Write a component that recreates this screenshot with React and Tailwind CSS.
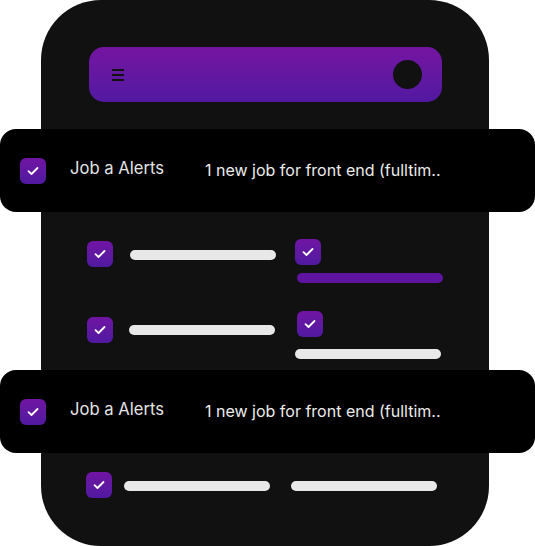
import React from "react";

function Check({ className = "" }) {
  return (
    <div
      className={`w-[26px] h-[26px] shrink-0 rounded-[6px] bg-gradient-to-b from-[#7114a3] to-[#5019a0] flex items-center justify-center ${className}`}
    >
      <svg width="12" height="10" viewBox="0 0 12 10" fill="none">
        <path d="M1.5 5.2l3 2.8L10.5 2" stroke="#fff" strokeWidth="1.8" strokeLinecap="round" strokeLinejoin="round" />
      </svg>
    </div>
  );
}

function Bar({ className = "", purple = false }) {
  return (
    <div
      className={`w-[146px] h-[10px] shrink-0 rounded-full ${purple ? "bg-[#5f14a0]" : "bg-[#e8e8e8]"} ${className}`}
    />
  );
}

function Alert({ className = "" }) {
  return (
    <div className={`-ml-[41px] w-[535px] h-[83px] rounded-[16px] bg-black flex items-center pl-[20px] ${className}`}>
      <Check />
      <span className="ml-[24px] w-[135px] pb-[4px] text-[16.6px] text-[#e4e4e4] whitespace-nowrap">Job a Alerts</span>
      <span className="pb-[1px] text-[16px] text-[#ececec] whitespace-nowrap">1 new job for front end (fulltim..</span>
    </div>
  );
}

export default function App() {
  return (
    <div className="w-[535px] h-[546px] bg-white font-['Inter',sans-serif] overflow-hidden">
      <div className="ml-[41px] w-[448px] h-[546px] rounded-[60px] bg-[#111111] flex flex-col pt-[47px]">
        {/* header */}
        <div className="ml-[48px] w-[353px] h-[55px] rounded-[15px] bg-gradient-to-b from-[#7514a1] to-[#5218a1] flex items-center justify-between pl-[23px] pr-[20px]">
          <div className="flex flex-col gap-[3px] w-[12px]">
            <span className="h-[2px] bg-[#111]" />
            <span className="h-[2px] bg-[#111]" />
            <span className="h-[2px] bg-[#111]" />
          </div>
          <div className="w-[29px] h-[29px] rounded-full bg-[#111111]" />
        </div>

        <Alert className="mt-[27px]" />

        {/* row 1 */}
        <div className="mt-[27px] flex items-start pl-[46px]">
          <Check className="mt-[2px]" />
          <Bar className="ml-[17px] mt-[11px]" />
          <div className="ml-[19px] flex flex-col">
            <Check />
            <Bar purple className="ml-[2px] mt-[8px]" />
          </div>
        </div>

        {/* row 2 */}
        <div className="mt-[28px] flex items-start pl-[46px]">
          <Check className="mt-[6px]" />
          <Bar className="ml-[16px] mt-[14px]" />
          <div className="ml-[20px] flex flex-col">
            <Check className="ml-[2px]" />
            <Bar className="mt-[12px]" />
          </div>
        </div>

        <Alert className="mt-[11px]" />

        {/* row 3 */}
        <div className="mt-[19px] flex items-start pl-[45px]">
          <Check />
          <Bar className="ml-[12px] mt-[9px]" />
          <Bar className="ml-[21px] mt-[9px]" />
        </div>
      </div>
    </div>
  );
}
